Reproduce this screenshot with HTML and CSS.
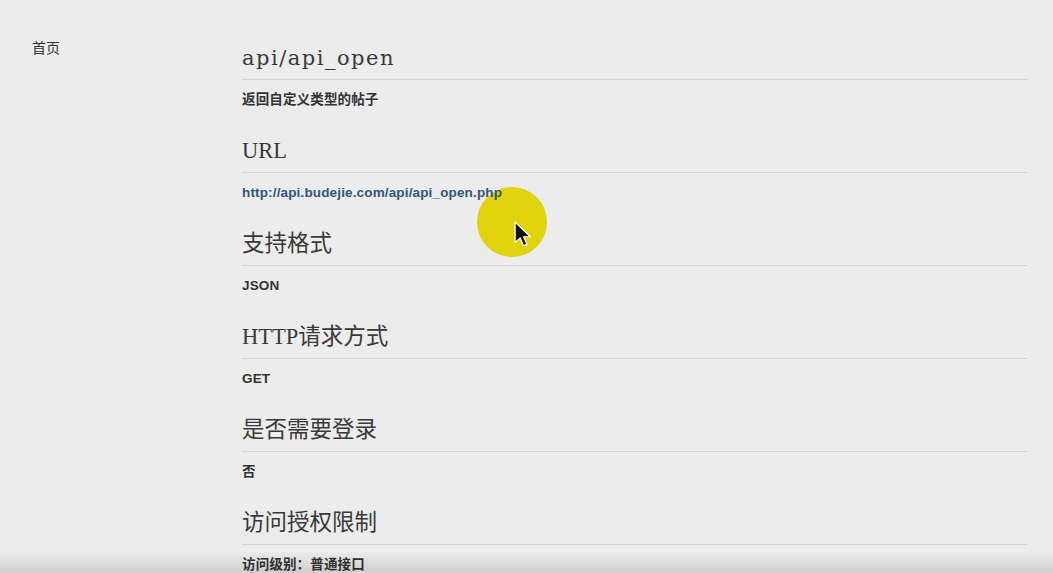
FILE: index.html
```html
<!DOCTYPE html>
<html lang="zh">
<head>
    <meta charset="UTF-8">
    <title>api/api_open</title>
    <link rel="stylesheet" href="styles.css">
</head>
<body>
    <nav class="sidebar">
        <a href="#" class="nav-link">首页</a>
    </nav>
    <main class="doc">
        <section class="block">
            <h2 class="block-title title-main">api/api_open</h2>
            <p class="block-text">返回自定义类型的帖子</p>
        </section>
        <section class="block">
            <h2 class="block-title">URL</h2>
            <p class="block-text"><a href="#" class="link">http://api.budejie.com/api/api_open.php</a></p>
        </section>
        <section class="block">
            <h2 class="block-title">支持格式</h2>
            <p class="block-text">JSON</p>
        </section>
        <section class="block">
            <h2 class="block-title">HTTP请求方式</h2>
            <p class="block-text">GET</p>
        </section>
        <section class="block">
            <h2 class="block-title">是否需要登录</h2>
            <p class="block-text">否</p>
        </section>
        <section class="block">
            <h2 class="block-title">访问授权限制</h2>
            <p class="block-text">访问级别：普通接口</p>
        </section>
    </main>

    <!-- screen recorder pointer highlight -->
    <div class="pointer">
        <svg class="cursor" width="18" height="27" viewBox="0 0 16 24">
            <path d="M1 1 L1 19 L5.5 15 L8.5 22 L11.5 20.6 L8.5 14 L14.5 14 Z" fill="#111" stroke="#fff" stroke-width="1.1" stroke-linejoin="round"/>
        </svg>
    </div>
    <div class="shade"></div>
</body>
</html>
```

FILE: styles.css
```css
body {
    margin: 0;
    background-color: #ececec;
    color: #333;
    font-family: "Liberation Sans", "Noto Sans CJK SC", sans-serif;
    display: flex;
    min-height: 100vh;
    overflow: hidden;
}

.sidebar {
    width: 210px;
    padding: 38px 0 0 32px;
    flex-shrink: 0;
}

.nav-link {
    font-size: 14px;
    line-height: 20px;
    color: #333;
    text-decoration: none;
}

.doc {
    flex: 1;
    padding: 43px 26px 0 0;
}

.block {
    margin-bottom: 28px;
}

.block-title {
    margin: 0;
    padding-bottom: 6px;
    font-family: "Liberation Serif", "Noto Sans CJK SC", serif;
    font-weight: normal;
    font-size: 22.5px;
    line-height: 30px;
    color: #3a3a3a;
    border-bottom: 1px solid #d4d4d4;
}

.title-main {
    font-family: "DejaVu Serif", serif;
    font-size: 21px;
    letter-spacing: 1.5px;
}

.block-text {
    margin: 12px 0 0;
    font-size: 13.5px;
    line-height: 16px;
    letter-spacing: 0.15px;
    font-weight: bold;
    color: #333;
}

.link {
    position: relative;
    z-index: 2;
    color: #33557a;
    text-decoration: none;
}

.pointer {
    position: absolute;
    z-index: 1;
    left: 477px;
    top: 187px;
    width: 70px;
    height: 70px;
    border-radius: 50%;
    background-color: #e0d30b;
}

.cursor {
    position: absolute;
    left: 37px;
    top: 34px;
}

.shade {
    position: fixed;
    z-index: 3;
    left: 0;
    right: 0;
    bottom: 0;
    height: 22px;
    background: linear-gradient(to bottom, rgba(0, 0, 0, 0), rgba(0, 0, 0, 0.12));
    pointer-events: none;
}
```
